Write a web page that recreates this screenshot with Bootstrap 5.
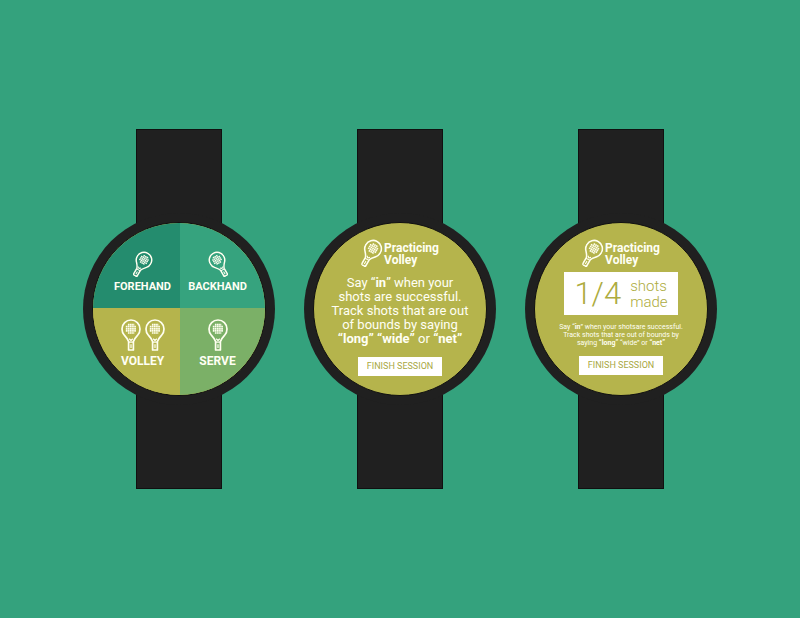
<!DOCTYPE html>
<html lang="en">
<head>
<meta charset="utf-8">
<meta name="viewport" content="width=device-width, initial-scale=1">
<title>Tennis watch app</title>
<link rel="stylesheet" href="https://cdn.jsdelivr.net/npm/bootstrap@5.3.0/dist/css/bootstrap.min.css">
<style>
  :root { --case: #202020; --edge: #101010; --olive: #b5b44c; --paper: #fffff4; }
  body { background: #34a27d; font-family: Roboto, "Liberation Sans", sans-serif; color: var(--paper); }
  .watches { gap: 29px; }
  .strap { width: 86px; height: 95px; background: var(--case); border: 1px solid var(--edge); }
  .strap-top { border-bottom: 0; margin-bottom: -11px; }
  .strap-bottom { border-top: 0; margin-top: -11px; }
  .face { width: 192px; height: 192px; padding: 9px; background: var(--case); }
  .screen { border: 1px solid var(--edge); background: var(--olive); }
  .session { padding-top: 16px; }
  .shot { border: 0; color: var(--paper); font-weight: 700; font-size: 12px; line-height: 14px; }
  .shot-start { padding: 0 0 0 12px; }
  .shot-end { padding: 0 10px 0 0; }
  .shot-upper { padding-bottom: 14px; font-size: 11px; }
  .shot-lower { padding-top: 11px; }
  .shot svg { margin-bottom: 3px; }
  .forehand { background: #248c6e; }
  .backhand { background: #36a37e; }
  .volley { background: var(--olive); }
  .serve { background: #7bb067; }
  .session-head { gap: 1px; }
  .title { font-size: 12px; line-height: 12px; font-weight: 700; padding-top: 1px; }
  .guide { font-size: 13px; line-height: 14px; margin-top: 9px; }
  .guide-small { font-size: 7px; line-height: 8px; margin-top: 8px; }
  .score { background: #fff; color: #adac40; width: 114px; height: 43px; margin-top: 5px; gap: 9px; font-weight: 300; }
  .score-count { font-size: 31px; line-height: 32px; }
  .score-unit { font-size: 15px; line-height: 16px; }
  .finish { background: #fff; color: #a9a83f; width: 84px; height: 19px; padding: 0; font-size: 9px; line-height: 19px; border: 0; border-radius: 0; }
  .finish-first { margin-top: 11px; }
  .finish-second { margin-top: 9px; }
</style>
<script src="https://cdn.jsdelivr.net/npm/bootstrap@5.3.0/dist/js/bootstrap.bundle.min.js"></script>
</head>
<body>
<svg class="d-none" aria-hidden="true">
  <symbol id="racket" viewBox="0 0 20 32">
    <g fill="none" stroke="#fffff0" stroke-linejoin="round">
      <path stroke-width="1.700" d="M7.600 22.500C7 20 5 18 3.200 16C1.800 14.400 1 12.400 1 10A9 9 0 0 1 19 10C19 12.400 18.200 14.400 16.800 16C15 18 13 20 12.400 22.500V31H7.600Z"/>
      <path stroke-width="1.700" stroke-dasharray="1.700 .4" d="M6.900 5.600H13.500M4.800 7.700H15.200M4.800 9.800H15.200M4.800 11.900H15.200M6.900 14H13.500"/>
      <path stroke-width="1.200" d="M7.600 23.200H12.400M8.200 19.800L10 21.500L11.800 19.800M10 25.300V29"/>
    </g>
  </symbol>
  <symbol id="racket-tilted" viewBox="0 0 20 26">
    <g transform="translate(11 9) rotate(30) scale(.86) translate(-10 -10)">
      <use href="#racket" width="20" height="32"/>
    </g>
  </symbol>
</svg>

<main class="watches d-flex flex-wrap justify-content-center align-items-center min-vh-100">

  <section class="d-flex flex-column align-items-center" aria-label="Choose a shot">
    <div class="strap strap-top"></div>
    <div class="face rounded-circle position-relative z-1">
      <div class="screen rounded-circle overflow-hidden h-100 d-flex flex-column">
        <div class="row g-0 flex-fill">
          <button type="button" class="col shot shot-upper shot-start forehand d-flex flex-column align-items-center justify-content-end">
            <svg width="20" height="26" aria-hidden="true"><use href="#racket-tilted"/></svg>
            FOREHAND
          </button>
          <button type="button" class="col shot shot-upper shot-end backhand d-flex flex-column align-items-center justify-content-end">
            <svg width="20" height="26" viewBox="0 0 20 26" aria-hidden="true"><g transform="translate(20 0) scale(-1 1)"><use href="#racket-tilted" width="20" height="26"/></g></svg>
            BACKHAND
          </button>
        </div>
        <div class="row g-0 flex-fill">
          <button type="button" class="col shot shot-lower shot-start volley d-flex flex-column align-items-center">
            <span class="d-flex gap-1">
              <svg width="20" height="32" aria-hidden="true"><use href="#racket"/></svg>
              <svg width="20" height="32" aria-hidden="true"><use href="#racket"/></svg>
            </span>
            VOLLEY
          </button>
          <button type="button" class="col shot shot-lower shot-end serve d-flex flex-column align-items-center">
            <svg width="20" height="32" aria-hidden="true"><use href="#racket"/></svg>
            SERVE
          </button>
        </div>
      </div>
    </div>
    <div class="strap strap-bottom"></div>
  </section>

  <section class="d-flex flex-column align-items-center" aria-label="Session instructions">
    <div class="strap strap-top"></div>
    <div class="face rounded-circle position-relative z-1">
      <div class="screen session rounded-circle h-100 d-flex flex-column align-items-center">
        <header class="session-head d-flex align-items-center">
          <svg width="22" height="28" viewBox="0 0 20 26" aria-hidden="true"><use href="#racket-tilted" width="20" height="26"/></svg>
          <h2 class="title mb-0">Practicing<br>Volley</h2>
        </header>
        <p class="guide text-center text-nowrap mb-0">Say “<b>in</b>” when your<br>shots are successful.<br>Track shots that are out<br>of bounds by saying<br><b>“long” “wide”</b> or <b>“net”</b></p>
        <button type="button" class="btn finish finish-first">FINISH SESSION</button>
      </div>
    </div>
    <div class="strap strap-bottom"></div>
  </section>

  <section class="d-flex flex-column align-items-center" aria-label="Session score">
    <div class="strap strap-top"></div>
    <div class="face rounded-circle position-relative z-1">
      <div class="screen session rounded-circle h-100 d-flex flex-column align-items-center">
        <header class="session-head d-flex align-items-center">
          <svg width="22" height="28" viewBox="0 0 20 26" aria-hidden="true"><use href="#racket-tilted" width="20" height="26"/></svg>
          <h2 class="title mb-0">Practicing<br>Volley</h2>
        </header>
        <div class="score d-flex align-items-center justify-content-center">
          <span class="score-count">1/4</span>
          <span class="score-unit">shots<br>made</span>
        </div>
        <p class="guide-small text-center text-nowrap mb-0">Say “<b>in</b>” when your shotsare successful.<br>Track shots that are out of bounds by<br>saying <b>“long”</b> “wide” or <b>“net”</b></p>
        <button type="button" class="btn finish finish-second">FINISH SESSION</button>
      </div>
    </div>
    <div class="strap strap-bottom"></div>
  </section>

</main>
</body>
</html>
